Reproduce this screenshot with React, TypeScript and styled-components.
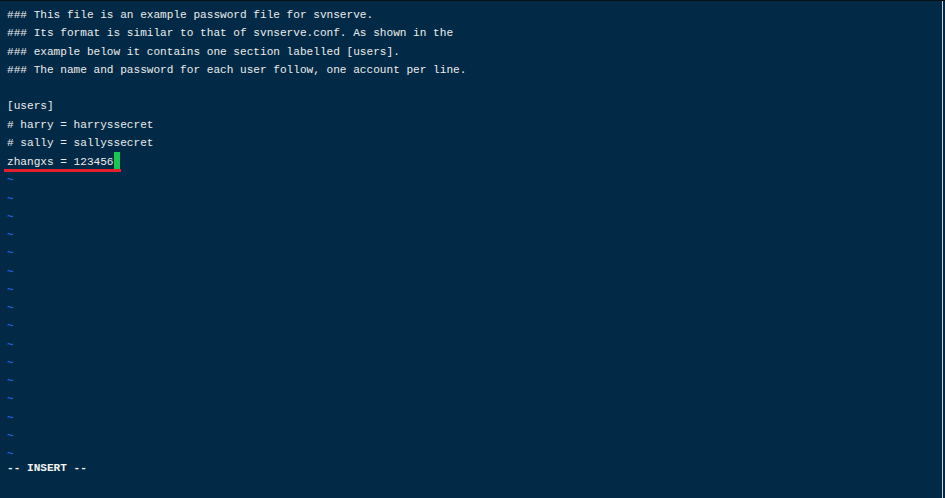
import React from "react";
import styled, { createGlobalStyle } from "styled-components";

const Global = createGlobalStyle`
  html, body { margin: 0; padding: 0; background: #022a46; }
  #root { width: 945px; height: 498px; }
`;

const Screen = styled.div`
  width: 945px;
  height: 498px;
  display: flex;
  flex-direction: row;
  background: #022a46;
  border-top: 1px solid #0b0f14;
  box-sizing: border-box;
  overflow: hidden;
`;

const Editor = styled.div`
  flex: 1;
  display: flex;
  flex-direction: column;
  padding: 5px 0 0 7px;
  font-family: "Liberation Mono", "DejaVu Sans Mono", monospace;
  font-size: 11.1px;
  color: #ececec;
`;

const Divider = styled.div`
  width: 1px;
  background: #cfd2d4;
`;

const Gutter = styled.div`
  width: 2px;
  background: #022a46;
`;

const Line = styled.div<{ $marked?: boolean }>`
  position: relative;
  height: 18.25px;
  line-height: 18.25px;
  white-space: pre;
  &::after {
    content: "";
    display: ${(p) => (p.$marked ? "block" : "none")};
    position: absolute;
    left: -3px;
    width: 117px;
    bottom: -2px;
    height: 3px;
    background: #e3202b;
  }
`;

const Tilde = styled(Line)`
  color: #2160d8;
  font-weight: bold;
  padding-top: 1px;
  height: 17.25px;
`;

const Cursor = styled.span`
  display: inline-block;
  width: 6px;
  height: 17px;
  vertical-align: -4px;
  background: #19c64f;
`;

const Status = styled.div`
  margin-top: -3px;
  height: 18px;
  line-height: 18px;
  white-space: pre;
  font-weight: bold;
  color: #f2f2f2;
`;

const textLines = [
  "### This file is an example password file for svnserve.",
  "### Its format is similar to that of svnserve.conf. As shown in the",
  "### example below it contains one section labelled [users].",
  "### The name and password for each user follow, one account per line.",
  "",
  "[users]",
  "# harry = harryssecret",
  "# sally = sallyssecret",
];

export default function App() {
  return (
    <>
      <Global />
      <Screen>
        <Editor>
          {textLines.map((t, i) => (
            <Line key={i}>{t}</Line>
          ))}
          <Line $marked>
            zhangxs = 123456
            <Cursor />
          </Line>
          {Array.from({ length: 16 }).map((_, i) => (
            <Tilde key={i}>~</Tilde>
          ))}
          <Status>-- INSERT --</Status>
        </Editor>
        <Divider />
        <Gutter />
      </Screen>
    </>
  );
}
